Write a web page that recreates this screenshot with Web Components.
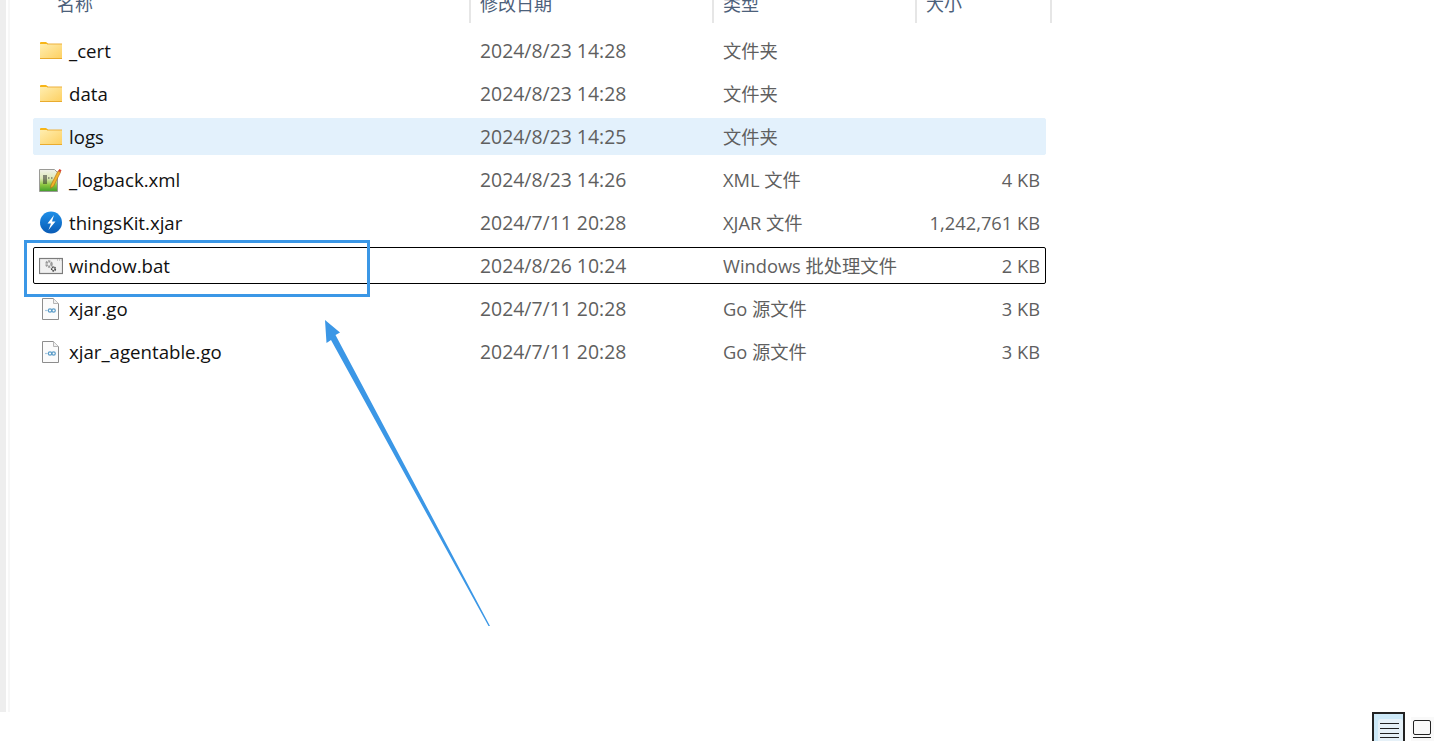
<!DOCTYPE html>
<html>
<head>
<meta charset="utf-8">
<style>
  html, body { margin: 0; height: 100%; background: #fff; overflow: hidden; }
  body { font-family: "Open Sans", "Noto Sans CJK SC", sans-serif; }
</style>
</head>
<body>
<explorer-app>
  <list-header></list-header>
  <file-row name="_cert" date="2024/8/23 14:28" type="文件夹" icon="folder"></file-row>
  <file-row name="data" date="2024/8/23 14:28" type="文件夹" icon="folder"></file-row>
  <file-row name="logs" date="2024/8/23 14:25" type="文件夹" icon="folder" selected></file-row>
  <file-row name="_logback.xml" date="2024/8/23 14:26" type="XML 文件" size="4 KB" icon="xml"></file-row>
  <file-row name="thingsKit.xjar" date="2024/7/11 20:28" type="XJAR 文件" size="1,242,761 KB" icon="xjar"></file-row>
  <file-row name="window.bat" date="2024/8/26 10:24" type="Windows 批处理文件" size="2 KB" icon="bat" focused></file-row>
  <file-row name="xjar.go" date="2024/7/11 20:28" type="Go 源文件" size="3 KB" icon="go"></file-row>
  <file-row name="xjar_agentable.go" date="2024/7/11 20:28" type="Go 源文件" size="3 KB" icon="go"></file-row>
</explorer-app>
<script>
const ICONS = {
  folder: `<svg width="24" height="24" viewBox="0 0 24 24">
    <defs><linearGradient id="f" x1="0" y1="0" x2="1" y2="1"><stop offset="0" stop-color="#ffeeb0"/><stop offset="1" stop-color="#fdd062"/></linearGradient></defs>
    <path d="M1 4a1 1 0 0 1 1-1h5l2 1.500V7H1z" fill="#f7b518"/>
    <rect x="1" y="5" width="22" height="14.500" fill="url(#f)"/>
    <rect x="8" y="4.500" width="15" height="1" fill="#eeb13f"/>
    <rect x="1" y="19" width="22" height="1" fill="#e9ab2e"/>
  </svg>`,
  xml: `<svg width="24" height="24" viewBox="0 0 24 24">
    <defs><linearGradient id="x" x1="0" y1="0" x2="0" y2="1"><stop offset="0" stop-color="#f1f1ea"/><stop offset=".4" stop-color="#dfe9b8"/><stop offset=".7" stop-color="#8cc63f"/><stop offset="1" stop-color="#3f9e2a"/></linearGradient></defs>
    <path d="M.5 1.500h15l3 3v19H.5z" fill="url(#x)" stroke="#9a9a96"/>
    <path d="M5 7v9M7 7v9" stroke="#222" stroke-width="1"/>
    <path d="M9 10h1.500M12 10h1.500" stroke="#444" stroke-width="1.200"/>
    <path d="M12 17l7-14 2.500 1.300-7 14-3 2z" fill="#f2b32c" stroke="#b06a12" stroke-width=".6"/>
    <path d="M19 3l2.500 1.300 1-2-2-1.300z" fill="#d9452f"/>
  </svg>`,
  xjar: `<svg width="24" height="24" viewBox="0 0 24 24">
    <defs><linearGradient id="j" x1="0" y1="0" x2="0" y2="1"><stop offset="0" stop-color="#1e8fe8"/><stop offset="1" stop-color="#0a5bb5"/></linearGradient></defs>
    <circle cx="12" cy="11.500" r="11" fill="url(#j)"/>
    <path d="M15 4L8.500 12.500h3.500L9.500 19 16.500 10.500H13z" fill="#fff"/>
  </svg>`,
  bat: `<svg width="24" height="24" viewBox="0 0 24 24">
    <rect x=".5" y="4.500" width="23" height="15" fill="#f1f1f1" stroke="#7c7c7c" stroke-width="1.200"/>
    <path d="M18 6h1M20 6h1M22 6h.6" stroke="#9a9a9a"/>
    <circle cx="10" cy="10" r="2.600" fill="none" stroke="#9a9a9a" stroke-width="2.400" stroke-dasharray="2 .8"/>
    <circle cx="14.500" cy="15" r="1.800" fill="none" stroke="#4a4a4a" stroke-width="1.700" stroke-dasharray="1.500 .6"/>
  </svg>`,
  go: `<svg width="24" height="24" viewBox="0 0 24 24">
    <path d="M3.500 1.500h11l5 5v16h-16z" fill="#fbfbfb" stroke="#8d8d8d"/>
    <path d="M14.500 1.500v5h5" fill="#f0f0f0" stroke="#b5b5b5"/>
    <path d="M6 13.500h2.500" stroke="#a8c8e0" stroke-width="1.200"/>
    <circle cx="11" cy="13.500" r="1.700" fill="none" stroke="#5b9cc8" stroke-width="1.200"/>
    <circle cx="14.600" cy="13.500" r="1.700" fill="none" stroke="#5b9cc8" stroke-width="1.200"/>
  </svg>`
};

class ExplorerApp extends HTMLElement {
  constructor() {
    super();
    this.attachShadow({ mode: "open" });
    this.shadowRoot.innerHTML = `
      <style>
        :host { display: flex; flex-direction: column; width: 1439px; height: 741px; position: relative; overflow: hidden; background: #fff; }
        .main { display: flex; height: 712px; }
        .edge { width: 6px; background: #eeeeee; }
        .gap { width: 2px; background: #fff; }
        .edge2 { width: 2px; background: #f7f7f7; }
        .list { width: 1051px; padding-left: 23px; display: flex; flex-direction: column; }
        .status { flex: 1; display: flex; justify-content: flex-end; align-items: flex-start; gap: 6px; padding-right: 5px; }
        .ann { position: absolute; left: 24px; top: 240px; width: 340px; height: 51px; border: 3px solid #3b97e6; }
        .arrow { position: absolute; left: 320px; top: 315px; }
      </style>
      <div class="main">
        <div class="edge"></div><div class="gap"></div><div class="edge2"></div>
        <div class="list"><slot></slot></div>
      </div>
      <div class="status">
        <view-btn active></view-btn>
        <view-btn></view-btn>
      </div>
      <div class="ann"></div>
      <svg class="arrow" width="175" height="315" viewBox="320 315 175 315">
        <path d="M325 320L340 332.500 335.500 335 490 626 488.500 626 331 340 326.500 343z" fill="#3b97e6"/>
      </svg>`;
  }
}

class ListHeader extends HTMLElement {
  constructor() {
    super();
    this.attachShadow({ mode: "open" });
    this.shadowRoot.innerHTML = `
      <style>
        :host { display: grid; grid-template-columns: 437px 243px 203px 135px; height: 23px; margin-bottom: 9px; overflow: hidden; font-size: 18px; color: #4c607a; font-family: "Noto Sans CJK SC", sans-serif; }
        div { border-right: 2px solid #e6e6e6; box-sizing: border-box; padding-left: 10px; height: 23px; margin-right: -1px; }
        span { display: block; line-height: 24px; margin-top: -9px; white-space: nowrap; }
        div:first-of-type { padding-left: 24px; }
      </style>
      <div><span>名称</span></div>
      <div><span>修改日期</span></div>
      <div><span>类型</span></div>
      <div><span>大小</span></div>`;
  }
}

class FileRow extends HTMLElement {
  constructor() {
    super();
    this.attachShadow({ mode: "open" });
  }
  connectedCallback() {
    const a = (k) => this.getAttribute(k) || "";
    this.shadowRoot.innerHTML = `
      <style>
        :host { display: grid; grid-template-columns: 441px 243px 1fr auto; align-items: center; box-sizing: border-box; width: 1013px; height: 37px; margin-bottom: 6px; padding: 0 5px; border-radius: 2px; font-size: 18.3px; color: #5f5f5f; white-space: nowrap; border: 1px solid transparent; }
        :host([selected]) { background: #e3f1fc; border-color: #e3f1fc; }
        :host([focused]) { border-color: #000; }
        .name { display: flex; align-items: center; gap: 6px; color: #111; font-size: 18.65px; }
        svg { display: block; flex: none; }
        .date { font-size: 19.4px; }
        .type { margin-bottom: 2px; }
      </style>
      <div class="name">${ICONS[a("icon")]}<span>${a("name")}</span></div>
      <div class="date">${a("date")}</div>
      <div class="type">${a("type")}</div>
      <div>${a("size")}</div>`;
  }
}

class ViewBtn extends HTMLElement {
  constructor() {
    super();
    this.attachShadow({ mode: "open" });
    this.shadowRoot.innerHTML = `
      <style>
        :host { display: block; box-sizing: border-box; width: 23px; height: 24px; margin-top: 5px; background: #f9f9f9; padding: 3px 0 0 2px; }
        :host([active]) { width: 33px; height: 29px; margin-top: 0; background: #cce8f7; border: 2px solid #222; border-bottom: 0; padding: 5px 0 0 4px; }
        .in { width: 25px; height: 24px; background: #e6f1f8; border-radius: 3px; }
        svg { display: block; }
      </style>
      ${this.hasAttribute("active")
        ? `<div class="in"><svg width="25" height="24"><path d="M2 4.500h19M2 9.500h19M2 14.500h19M2 18.500h19" stroke="#222" stroke-width="1"/></svg></div>`
        : `<svg width="18" height="21"><rect x=".5" y=".5" width="17" height="14" rx="1.500" fill="none" stroke="#222"/><path d="M0 17.500h18" stroke="#222"/></svg>`}`;
  }
}

customElements.define("explorer-app", ExplorerApp);
customElements.define("list-header", ListHeader);
customElements.define("file-row", FileRow);
customElements.define("view-btn", ViewBtn);
</script>
</body>
</html>
